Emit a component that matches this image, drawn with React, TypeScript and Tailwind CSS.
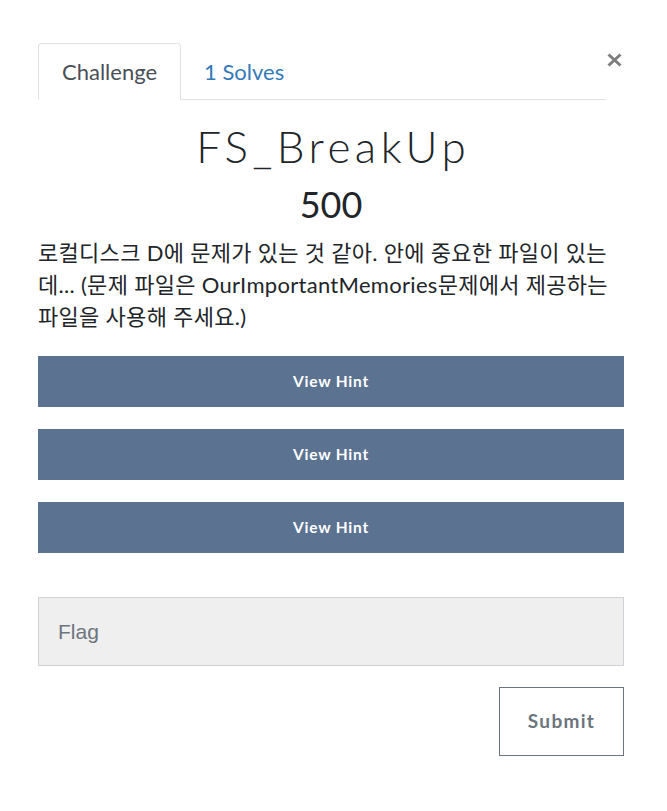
export default function App() {
  const hints = ["View Hint", "View Hint", "View Hint"];

  return (
    <div className="min-h-[811px] bg-white font-['Lato','Noto_Sans_CJK_KR',sans-serif]">
      <div className="px-[38px] pt-[43px] pb-[56px] w-[662px]">
        {/* Tabs header */}
        <div className="flex items-start">
          <div className="flex w-[568px] border-b border-[#dee2e6]">
            <div className="h-[57px] -mb-px px-[23px] flex items-center border border-[#dee2e6] border-b-white rounded-t-[4px] bg-white text-[22px] text-[#495057]">
              Challenge
            </div>
            <div className="h-[56px] px-[23px] flex items-center text-[22px] text-[#337ab7]">
              1 Solves
            </div>
          </div>
          <button className="ml-[1px] mt-[10px] text-[#7d7d7d]">
            <svg width="15" height="14" viewBox="0 0 15 14" fill="none" stroke="currentColor" strokeWidth="3">
              <path d="M1.5 1.5 L13.5 12.5 M13.5 1.5 L1.5 12.5" />
            </svg>
          </button>
        </div>

        {/* Title */}
        <h2 className="mt-[20px] pl-[4.5px] text-center text-[44px] leading-[52px] font-light tracking-[4.5px] text-[#212529]">
          FS_BreakUp
        </h2>
        <h3 className="mt-[10px] text-center text-[36px] leading-[44px] font-normal text-[#212529]">
          500
        </h3>

        <p className="mt-[11px] text-[22px] leading-[32px] tracking-[0.3px] text-[#212529]">
          로컬디스크 D에 문제가 있는 것 같아. 안에 중요한 파일이 있는
          <br />
          데... (문제 파일은 OurImportantMemories문제에서 제공하는
          <br />
          파일을 사용해 주세요.)
        </p>

        <div className="mt-[23px] flex flex-col gap-[22px]">
          {hints.map((h, i) => (
            <button
              key={i}
              className="h-[51px] w-full bg-[#5b7290] text-white text-[15.5px] font-bold tracking-[0.8px]"
            >
              {h}
            </button>
          ))}
        </div>

        <input
          placeholder="Flag"
          className="mt-[44px] block w-full h-[69px] px-[19px] bg-[#efefef] border border-[#cfd3d7] text-[21px] font-['Liberation_Sans',sans-serif] placeholder:text-[#6c757d] outline-none"
        />

        <div className="mt-[21px] flex justify-end">
          <button className="w-[125px] h-[69px] border border-[#6c757d] text-[#6c757d] text-[19px] font-bold tracking-[1.3px]">
            Submit
          </button>
        </div>
      </div>
    </div>
  );
}
